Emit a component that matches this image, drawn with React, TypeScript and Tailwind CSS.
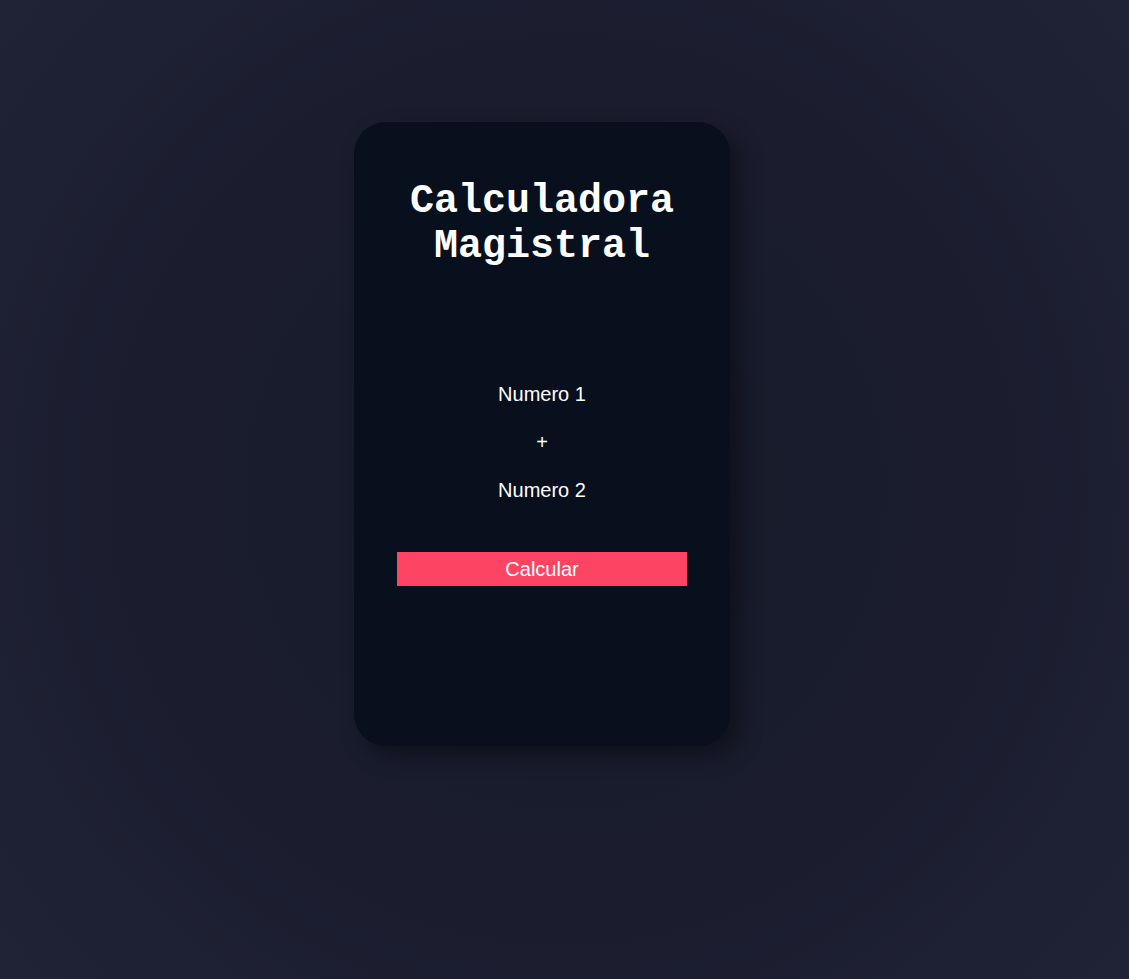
import React from "react";

export default function App() {
  return (
    <div className="min-h-[979px] w-full bg-[radial-gradient(circle_at_50%_50%,#161b29_0%,#1b1d2f_60%,#202336_100%)] flex justify-center pr-[45px] pt-[122px] font-['Liberation_Sans',Arial,sans-serif]">
      <div className="w-[376px] h-[624px] rounded-[32px] bg-[#080f1d] shadow-[10px_10px_22px_rgba(0,0,0,0.4)] flex flex-col items-center">
        <h1 className="mt-[57px] text-center text-[40px] leading-[45px] font-bold text-white font-['Liberation_Mono',monospace]">
          Calculadora
          <br />
          Magistral
        </h1>
        <div className="mt-[113px] flex flex-col items-center text-white text-[20px]">
          <span className="h-[24px] leading-[24px]">Numero 1</span>
          <span className="mt-[24px] h-[24px] leading-[24px]">+</span>
          <span className="mt-[24px] h-[24px] leading-[24px]">Numero 2</span>
        </div>
        <button className="mt-[50px] w-[290px] h-[34px] bg-[#fd4563] text-white text-[20px] leading-[34px]">
          Calcular
        </button>
      </div>
    </div>
  );
}
